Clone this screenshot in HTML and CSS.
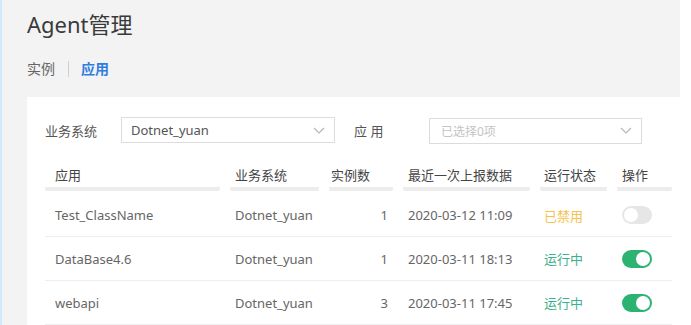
FILE: index.html
```html
<!DOCTYPE html>
<html lang="zh">
<head>
<meta charset="utf-8">
<title>Agent管理</title>
<link rel="stylesheet" href="styles.css">
</head>
<body>
<div class="page">
  <header class="head">
    <h1 class="title">Agent管理</h1>
    <nav class="tabs">
      <span class="tab">实例</span>
      <span class="sep"></span>
      <span class="tab active">应用</span>
    </nav>
  </header>
  <main class="main">
    <section class="card">
      <div class="filters">
        <label class="flabel">业务系统</label>
        <div class="select">
          <span class="sval">Dotnet_yuan</span>
          <svg class="chev" width="12" height="7" viewBox="0 0 12 7"><path d="M1 1l5 5 5-5" fill="none" stroke="#b5b5b5" stroke-width="1.1"/></svg>
        </div>
        <label class="flabel flabel2">应 用</label>
        <div class="select select2">
          <span class="sval placeholder">已选择0项</span>
          <svg class="chev" width="12" height="7" viewBox="0 0 12 7"><path d="M1 1l5 5 5-5" fill="none" stroke="#b5b5b5" stroke-width="1.1"/></svg>
        </div>
      </div>
      <div class="table">
        <div class="thead">
          <div class="th c1">应用</div>
          <div class="th c2">业务系统</div>
          <div class="th c3">实例数</div>
          <div class="th c4">最近一次上报数据</div>
          <div class="th c5">运行状态</div>
          <div class="th c6">操作</div>
        </div>
        <div class="row first">
          <div class="td c1">Test_ClassName</div>
          <div class="td c2">Dotnet_yuan</div>
          <div class="td c3 num">1</div>
          <div class="td c4">2020-03-12 11:09</div>
          <div class="td c5 st-off">已禁用</div>
          <div class="td c6"><span class="toggle"></span></div>
        </div>
        <div class="row">
          <div class="td c1">DataBase4.6</div>
          <div class="td c2">Dotnet_yuan</div>
          <div class="td c3 num">1</div>
          <div class="td c4">2020-03-11 18:13</div>
          <div class="td c5 st-on">运行中</div>
          <div class="td c6"><span class="toggle on"></span></div>
        </div>
        <div class="row">
          <div class="td c1">webapi</div>
          <div class="td c2">Dotnet_yuan</div>
          <div class="td c3 num">3</div>
          <div class="td c4">2020-03-11 17:45</div>
          <div class="td c5 st-on">运行中</div>
          <div class="td c6"><span class="toggle on"></span></div>
        </div>
      </div>
    </section>
  </main>
</div>
</body>
</html>
```
FILE: styles.css
```css
* { box-sizing: border-box; }
html, body { margin: 0; padding: 0; }
body {
  background: #ffffff;
  font-family: "Noto Sans", "Noto Sans CJK SC", sans-serif;
  color: #333;
  width: 691px;
  height: 325px;
  overflow: hidden;
}
.page {
  border-left: 2px solid #cfe9fb;
  height: 325px;
  display: flex;
  flex-direction: column;
}
.head {
  width: 678px;
  height: 99px;
  background: #f3f3f3;
  padding: 9px 0 0 25px;
}
.title {
  margin: 0;
  font-size: 22px;
  line-height: 30px;
  font-weight: 400;
  color: #3a3a3a;
}
.tabs {
  margin-top: 19px;
  display: flex;
  align-items: center;
  font-size: 14px;
  line-height: 22px;
}
.tab { color: #666; }
.tab.active { color: #2f7de1; font-weight: 700; }
.sep {
  width: 1px;
  height: 16px;
  background: #cfcfcf;
  margin: 0 12px 0 13px;
}
.main {
  flex: 1;
  background: linear-gradient(to right, #f3f3f3 25px, #ffffff 25px);
  padding-left: 25px;
}
.card {
  background: #fff;
  height: 100%;
  padding: 20px 0 0 18px;
}
.filters {
  display: flex;
  align-items: center;
  height: 26px;
  font-size: 13px;
}
.flabel {
  width: 76px;
  color: #555;
}
.flabel2 {
  width: 75px;
  margin-left: 19px;
}
.select {
  width: 214px;
  height: 26px;
  border: 1px solid #dcdcdc;
  display: flex;
  align-items: center;
  justify-content: space-between;
  padding: 0 9px 0 9px;
}
.select2 { width: 213px; margin-top: 1px; padding-left: 11px; }
.sval { color: #555; }
.placeholder { color: #c4c4c4; font-size: 12px; }
.chev { display: block; }
.table {
  margin-top: 22px;
  width: 627px;
  font-size: 13px;
}
.thead, .row {
  display: grid;
  grid-template-columns: 175px 89px 64px 127px 67px 55px;
  column-gap: 10px;
}
.th {
  line-height: 20px;
  color: #444;
  padding-bottom: 2px;
  border-bottom: 4px solid #ececec;
  border-radius: 0 0 2px 2px;
}
.row {
  height: 44px;
  align-items: center;
  border-bottom: 1px solid #eeeeee;
  color: #666;
}
.row.first { height: 46px; padding-top: 3px; }
.c1 { padding-left: 10px; }
.c2 { padding-left: 5px; }
.c3 { padding-left: 2px; }
.c3.num { text-align: right; padding-right: 5px; }
.c4 { padding-left: 5px; }
.c5 { padding-left: 4px; }
.c6 { padding-left: 5px; }
.st-off { color: #f5c24c; }
.st-on { color: #3cb08d; }
.toggle {
  display: block;
  width: 30px;
  height: 18px;
  border-radius: 9px;
  background: #e6e6e6;
  position: relative;
}
.toggle::after {
  content: "";
  position: absolute;
  top: 2px;
  left: 2px;
  width: 14px;
  height: 14px;
  border-radius: 50%;
  background: #fff;
}
.toggle.on { background: #2db371; }
.toggle.on::after { left: 14px; }
```
